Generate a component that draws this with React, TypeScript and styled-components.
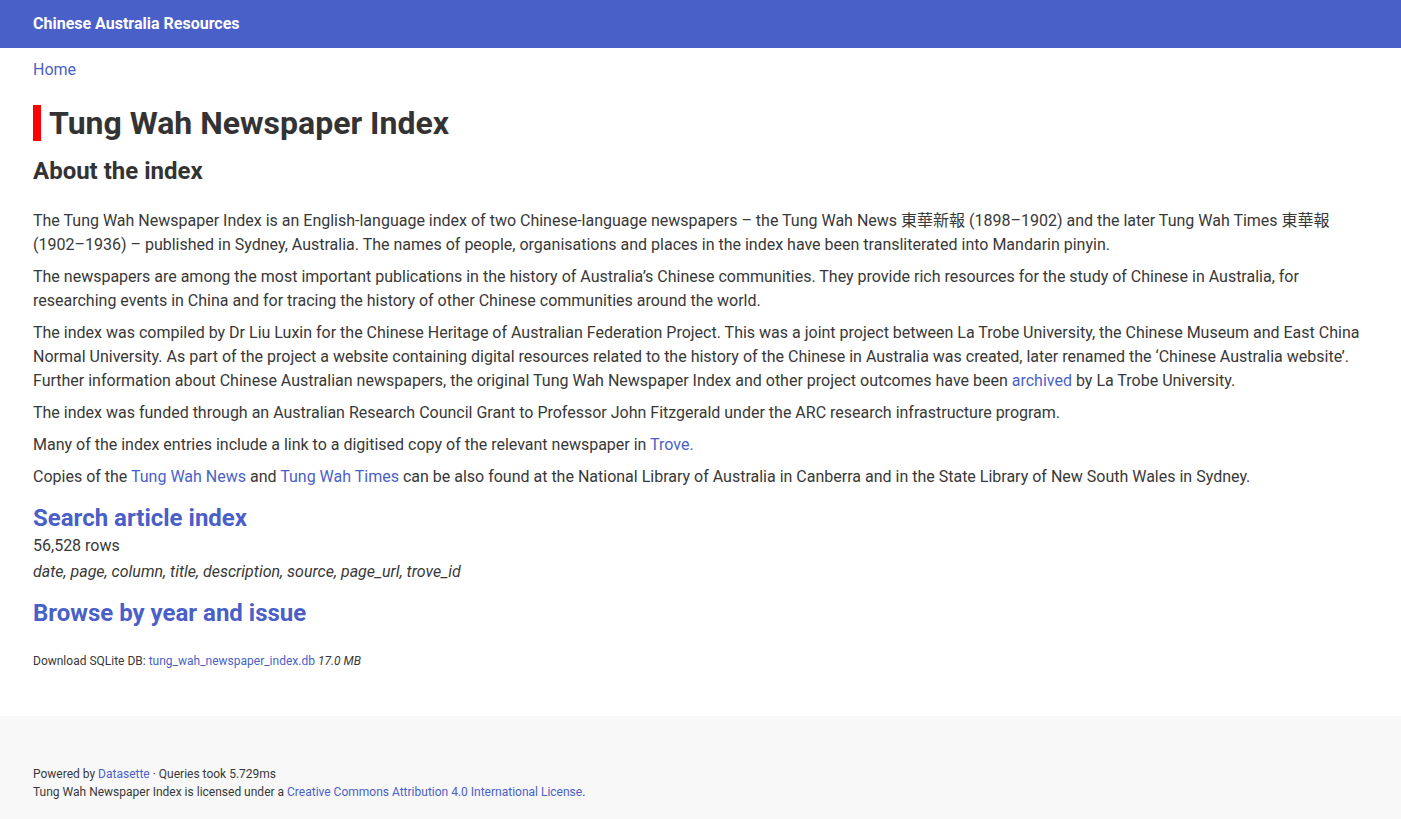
import React from "react";
import styled, { createGlobalStyle } from "styled-components";

const GlobalStyle = createGlobalStyle`
  html, body { margin: 0; padding: 0; }
  body {
    font-family: Roboto, "Noto Sans CJK TC", "Noto Sans CJK SC", sans-serif;
    color: #383838;
    background: #ffffff;
    font-size: 16px;
    line-height: 24px;
  }
  a { color: #4a5fc8; text-decoration: none; }
`;

const Page = styled.div`
  display: flex;
  flex-direction: column;
  min-height: 819px;
`;

const TopBar = styled.header`
  height: 48px;
  box-sizing: border-box;
  background: #4a60c9;
  display: flex;
  align-items: center;
  padding: 0 33px 1px;
`;

const SiteTitle = styled.a`
  color: #ffffff;
  font-weight: 700;
  font-size: 16px;
  line-height: 24px;
`;

const Main = styled.main`
  padding: 10px 33px 46px;
  display: flex;
  flex-direction: column;
`;

const Crumbs = styled.nav`
  font-size: 16px;
  line-height: 24px;
`;

const Title = styled.h1`
  margin: 23px 0 0;
  font-size: 32px;
  line-height: 36px;
  font-weight: 700;
  color: #333;
  border-left: 8px solid #ff0000;
  padding-left: 8px;
`;

const AboutHeading = styled.h2`
  margin: 15px 0 23px;
  font-size: 24px;
  line-height: 30px;
  font-weight: 700;
  color: #333;
`;

const LinkHeading = styled.h2<{ $top: number }>`
  margin: ${(p) => p.$top}px 0 0;
  font-size: 24px;
  line-height: 30px;
  font-weight: 700;
  a { color: #4a5fc8; }
`;

const Para = styled.p`
  margin: 0 0 8px;
  font-size: 16px;
  line-height: 24px;
`;

const Rows = styled.p`
  margin: 1px 0 2px;
  font-size: 16px;
  line-height: 24px;
`;

const Columns = styled.p`
  margin: 0;
  font-style: italic;
  font-size: 16px;
  line-height: 24px;
`;

const Download = styled.p`
  margin: 24px 0 0;
  font-size: 12px;
  line-height: 18px;
  em { font-style: italic; }
`;

const Footer = styled.footer`
  flex: 1;
  background: #f8f8f8;
  padding: 49px 33px 19px;
  font-size: 12px;
  line-height: 18px;
`;

const FootLine = styled.div``;

export default function App() {
  return (
    <>
      <GlobalStyle />
      <Page>
        <TopBar>
          <SiteTitle href="#">Chinese Australia Resources</SiteTitle>
        </TopBar>
        <Main>
          <Crumbs>
            <a href="#">Home</a>
          </Crumbs>
          <Title>Tung Wah Newspaper Index</Title>
          <AboutHeading>About the index</AboutHeading>
          <Para>
            The Tung Wah Newspaper Index is an English-language index of two Chinese-language newspapers – the Tung Wah News 東華新報 (1898–1902) and the later Tung Wah Times 東華報 (1902–1936) – published in Sydney, Australia. The names of people, organisations and places in the index have been transliterated into Mandarin pinyin.
          </Para>
          <Para>
            The newspapers are among the most important publications in the history of Australia’s Chinese communities. They provide rich resources for the study of Chinese in Australia, for researching events in China and for tracing the history of other Chinese communities around the world.
          </Para>
          <Para>
            The index was compiled by Dr Liu Luxin for the Chinese Heritage of Australian Federation Project. This was a joint project between La Trobe University, the Chinese Museum and East China Normal University. As part of the project a website containing digital resources related to the history of the Chinese in Australia was created, later renamed the ‘Chinese Australia website’. Further information about Chinese Australian newspapers, the original Tung Wah Newspaper Index and other project outcomes have been <a href="#">archived</a> by La Trobe University.
          </Para>
          <Para>
            The index was funded through an Australian Research Council Grant to Professor John Fitzgerald under the ARC research infrastructure program.
          </Para>
          <Para>
            Many of the index entries include a link to a digitised copy of the relevant newspaper in <a href="#">Trove.</a>
          </Para>
          <Para>
            Copies of the <a href="#">Tung Wah News</a> and <a href="#">Tung Wah Times</a> can be also found at the National Library of Australia in Canberra and in the State Library of New South Wales in Sydney.
          </Para>
          <LinkHeading $top={6}>
            <a href="#">Search article index</a>
          </LinkHeading>
          <Rows>56,528 rows</Rows>
          <Columns>date, page, column, title, description, source, page_url, trove_id</Columns>
          <LinkHeading $top={14}>
            <a href="#">Browse by year and issue</a>
          </LinkHeading>
          <Download>
            Download SQLite DB: <a href="#">tung_wah_newspaper_index.db</a> <em>17.0 MB</em>
          </Download>
        </Main>
        <Footer>
          <FootLine>
            Powered by <a href="#">Datasette</a> · Queries took 5.729ms
          </FootLine>
          <FootLine>
            Tung Wah Newspaper Index is licensed under a <a href="#">Creative Commons Attribution 4.0 International License</a>.
          </FootLine>
        </Footer>
      </Page>
    </>
  );
}
